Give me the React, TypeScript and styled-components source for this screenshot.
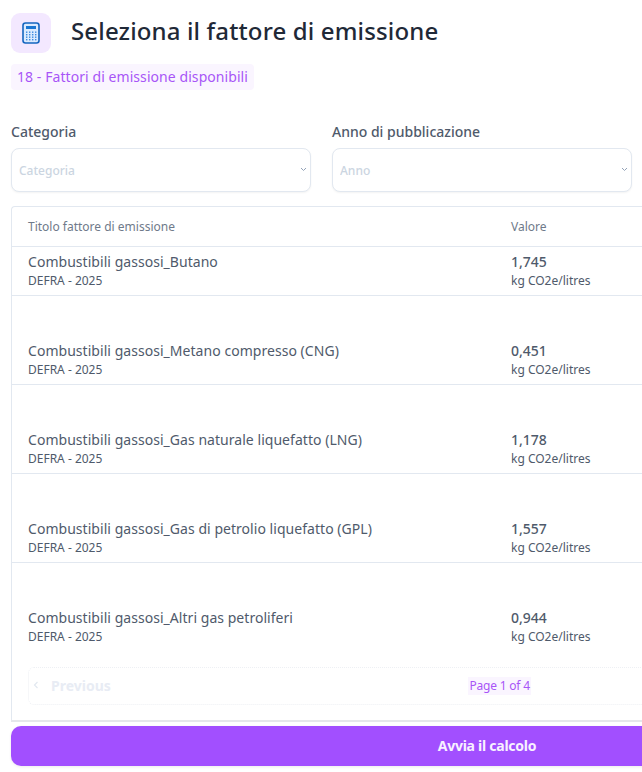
import { createGlobalStyle } from 'styled-components'
import styled from 'styled-components'

const GlobalStyle = createGlobalStyle`
  html, body {
    margin: 0;
    padding: 0;
    height: 100%;
    overflow: hidden;
    background: #ffffff;
  }
  body {
    font-family: 'Noto Sans', 'Open Sans', sans-serif;
  }
`

const Page = styled.div`
  width: 642px;
  height: 772px;
  overflow: hidden;
  padding: 13px 0 0 11px;
  box-sizing: border-box;
`

const Header = styled.div`
  display: flex;
  align-items: center;
  gap: 20px;
`

const IconBox = styled.div`
  width: 40px;
  height: 40px;
  flex: none;
  border-radius: 9px;
  background: #f3e8ff;
  display: flex;
  align-items: center;
  justify-content: center;
`

const Title = styled.h1`
  margin: 0 0 4px;
  font-size: 24px;
  line-height: 34px;
  font-weight: 500;
  letter-spacing: 0.14px;
  color: #1f2937;
  white-space: nowrap;
`

const CountBadge = styled.span`
  display: inline-block;
  margin-top: 11px;
  padding: 0 6px;
  height: 26px;
  line-height: 25px;
  border-radius: 4px;
  background: #faf5ff;
  color: #a855f7;
  font-size: 14px;
  letter-spacing: 0.07px;
`

const Filters = styled.div`
  display: grid;
  grid-template-columns: 300px 300px;
  column-gap: 21px;
  margin-top: 31px;
`

const Field = styled.div`
  display: flex;
  flex-direction: column;
  gap: 5px;
`

const Label = styled.label`
  font-size: 14px;
  line-height: 22px;
  font-weight: 500;
  color: #4f5a6b;
`

const SelectWrap = styled.div`
  position: relative;
`

const Select = styled.select`
  display: block;
  appearance: none;
  width: 100%;
  height: 44px;
  padding: 0 7px;
  box-sizing: border-box;
  border: 1px solid #e2e8f0;
  border-radius: 8px;
  background-color: #ffffff;
  box-shadow: 0 1px 2px rgba(0, 0, 0, 0.05);
  color: #cbd5e1;
  font-family: inherit;
  font-size: 12px;
  font-weight: 500;
`

const SelectArrow = styled.svg`
  position: absolute;
  top: 19px;
  right: 4px;
  pointer-events: none;
`

const Card = styled.div`
  width: 952px;
  height: 516px;
  margin-top: 14px;
  box-sizing: border-box;
  border-top: 1px solid #e2e8f0;
  border-left: 1px solid #e2e8f0;
  border-radius: 4px 0 0 0;
  border-bottom: 2px solid #e5e7eb;
`

const HeadRow = styled.div`
  display: grid;
  grid-template-columns: 483px 1fr;
  height: 39px;
  padding-left: 16px;
  align-items: center;
  border-bottom: 1px solid #e2e8f0;
  font-size: 12px;
  color: #6f7a8a;
`

const Row = styled.div<{ $spaced?: boolean; $last?: boolean }>`
  display: grid;
  grid-template-columns: 483px 1fr;
  padding: ${(p) => (p.$spaced ? '45px' : '5px')} 0 4px 16px;
  height: ${(p) => (p.$spaced ? '89px' : '49px')};
  box-sizing: border-box;
  border-bottom: ${(p) => (p.$last ? 'none' : '1px solid #e2e8f0')};
`

const Name = styled.div`
  font-size: 14px;
  line-height: 20px;
  letter-spacing: 0.04px;
  color: #4f5a6b;
`

const Source = styled.div`
  font-size: 12px;
  line-height: 18px;
  color: #4f5a6b;
`

const Value = styled.div`
  font-size: 14px;
  line-height: 20px;
  font-weight: 500;
  color: #4f5a6b;
`

const Pagination = styled.div`
  display: flex;
  align-items: center;
  justify-content: space-between;
  height: 38px;
  margin: 15px 16px 0;
  padding: 0 4px;
  box-sizing: border-box;
  border: 1px dotted #eef0f4;
  border-radius: 6px;
`

const PageButton = styled.span`
  display: flex;
  align-items: center;
  gap: 12px;
  padding-bottom: 2px;
  font-size: 14px;
  font-weight: 700;
  color: #e8ecf4;
`

const PageLabel = styled.span`
  margin-right: 2px;
  padding: 0 1px;
  line-height: 18px;
  background: #faf5ff;
  color: #a855f7;
  font-size: 12px;
  letter-spacing: -0.2px;
`

const StartButton = styled.button`
  display: block;
  width: 952px;
  height: 40px;
  margin-top: 4px;
  padding: 0 0 2px;
  border: none;
  border-radius: 10px;
  background: #a24fff;
  box-shadow: 0 1px 3px rgba(0, 0, 0, 0.08);
  color: #f8f2ff;
  font-family: inherit;
  font-size: 14px;
  font-weight: 700;
  letter-spacing: -0.25px;
`

const factors = [
  { name: 'Combustibili gassosi_Butano', value: '1,745' },
  { name: 'Combustibili gassosi_Metano compresso (CNG)', value: '0,451' },
  { name: 'Combustibili gassosi_Gas naturale liquefatto (LNG)', value: '1,178' },
  { name: 'Combustibili gassosi_Gas di petrolio liquefatto (GPL)', value: '1,557' },
  { name: 'Combustibili gassosi_Altri gas petroliferi', value: '0,944' },
]

function CalculatorIcon() {
  return (
    <svg width="18" height="22" viewBox="0 0 18 22">
      <rect x="1" y="1" width="16" height="20" rx="2.5" fill="#dbeafe" stroke="#1565c0" strokeWidth="1.6" />
      <rect x="4" y="4" width="10" height="3" fill="#1976d2" />
      {[9.5, 12, 14.5, 17].map((y) =>
        [4, 7, 10, 13].map((x) => (
          <rect key={`${x}-${y}`} x={x} y={y} width="1.4" height="1.4" fill="#3b8ae0" />
        )),
      )}
    </svg>
  )
}

function Chevron({ flip }: { flip?: boolean }) {
  return (
    <svg width="6" height="8" viewBox="0 0 6 8" style={flip ? { transform: 'scaleX(-1)' } : undefined}>
      <path d="M4.5 1 L1.5 4 L4.5 7" fill="none" stroke="#e2e8f0" strokeWidth="1.2" />
    </svg>
  )
}

function FilterSelect({ placeholder }: { placeholder: string }) {
  return (
    <SelectWrap>
      <Select defaultValue="">
        <option value="">{placeholder}</option>
      </Select>
      <SelectArrow width="7" height="5" viewBox="0 0 7 5">
        <path d="M1 1 L3.5 3.5 L6 1" fill="none" stroke="#94a3b8" strokeWidth="1" />
      </SelectArrow>
    </SelectWrap>
  )
}

export default function App() {
  return (
    <Page>
      <GlobalStyle />
      <Header>
        <IconBox>
          <CalculatorIcon />
        </IconBox>
        <Title>Seleziona il fattore di emissione</Title>
      </Header>
      <CountBadge>18 - Fattori di emissione disponibili</CountBadge>
      <Filters>
        <Field>
          <Label>Categoria</Label>
          <FilterSelect placeholder="Categoria" />
        </Field>
        <Field>
          <Label>Anno di pubblicazione</Label>
          <FilterSelect placeholder="Anno" />
        </Field>
      </Filters>
      <Card>
        <HeadRow>
          <span>Titolo fattore di emissione</span>
          <span>Valore</span>
        </HeadRow>
        {factors.map((f, i) => (
          <Row key={f.name} $spaced={i > 0} $last={i === factors.length - 1}>
            <div>
              <Name>{f.name}</Name>
              <Source>DEFRA - 2025</Source>
            </div>
            <div>
              <Value>{f.value}</Value>
              <Source>kg CO2e/litres</Source>
            </div>
          </Row>
        ))}
        <Pagination>
          <PageButton>
            <Chevron />
            Previous
          </PageButton>
          <PageLabel>Page 1 of 4</PageLabel>
          <PageButton>
            Next
            <Chevron flip />
          </PageButton>
        </Pagination>
      </Card>
      <StartButton>Avvia il calcolo</StartButton>
    </Page>
  )
}
